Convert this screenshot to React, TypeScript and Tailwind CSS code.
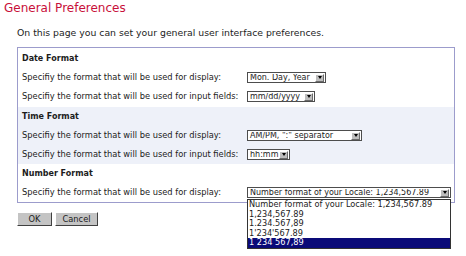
const base = "font-['DejaVu_Sans',Verdana,sans-serif] text-[#1c1c1c]";

function Arrow() {
  return (
    <span className="mr-px flex h-[8px] w-[9px] shrink-0 items-center justify-center border border-t-white border-l-white border-r-[#6b6b6b] border-b-[#6b6b6b] bg-[#bdbdbd]">
      <span className="h-0 w-0 border-x-[2.5px] border-t-[3px] border-x-transparent border-t-black" />
    </span>
  );
}

function Select({ value, w }: { value: string; w: string }) {
  return (
    <div className={`flex h-[11px] items-center border border-[#4d4d4d] bg-white ${w}`}>
      <span className="flex-1 overflow-hidden whitespace-nowrap pl-[2px] text-[8px] leading-none">
        {value}
      </span>
      <Arrow />
    </div>
  );
}

function Row({ label, value, w }: { label: string; value: string; w: string }) {
  return (
    <div className="flex h-[19px] items-center pl-[4px]">
      <span className="w-[225px] shrink-0 whitespace-nowrap text-[8.3px]">{label}</span>
      <Select value={value} w={w} />
    </div>
  );
}

function Header({ children }: { children: string }) {
  return (
    <div className="flex h-[19px] items-center pl-[4px] text-[8px] font-bold">{children}</div>
  );
}

const options = [
  "Number format of your Locale: 1,234,567.89",
  "1,234,567.89",
  "1.234.567,89",
  "1'234'567.89",
  "1 234 567,89",
];

export default function App() {
  return (
    <div className={`relative h-[256px] w-[466px] overflow-hidden bg-white ${base}`}>
      <h1 className="pl-[4px] pt-[1px] text-[12px] leading-[15px] text-[#c8103a]">
        General Preferences
      </h1>
      <p className="mt-[11px] pl-[17px] text-[9.3px] leading-[11px]">
        On this page you can set your general user interface preferences.
      </p>

      <div className="ml-[17px] mt-[9px] w-[438px] border border-[#9c9ccc]">
        <div className="py-px">
          <Header>Date Format</Header>
          <Row label="Specifiy the format that will be used for display:" value="Mon. Day, Year" w="w-[79px]" />
          <Row label="Specifiy the format that will be used for input fields:" value="mm/dd/yyyy" w="w-[68px]" />
        </div>
        <div className="bg-[#eef1f9]">
          <Header>Time Format</Header>
          <Row label="Specifiy the format that will be used for display:" value={'AM/PM, ":" separator'} w="w-[115px]" />
          <Row label="Specifiy the format that will be used for input fields:" value="hh:mm" w="w-[43px]" />
        </div>
        <div>
          <Header>Number Format</Header>
          <Row label="Specifiy the format that will be used for display:" value={options[0]} w="w-[204px]" />
        </div>
      </div>

      <div className="ml-[17px] mt-[9px] flex gap-[3px] text-[8.3px]">
        <button className="h-[14px] w-[35px] border border-t-white border-l-white border-r-[#404040] border-b-[#404040] bg-[#c4c4c4] leading-none">
          OK
        </button>
        <button className="h-[14px] w-[43px] border border-t-white border-l-white border-r-[#404040] border-b-[#404040] bg-[#c4c4c4] leading-none">
          Cancel
        </button>
      </div>

      <ul className="absolute left-[247px] top-[199px] w-[204px] border border-[#333] bg-white text-[8.2px] leading-[9.5px]">
        {options.map((o, i) => (
          <li
            key={o}
            className={i === options.length - 1 ? "bg-[#0a0a78] pl-px text-white" : "pl-px"}
          >
            {o}
          </li>
        ))}
      </ul>
    </div>
  );
}
